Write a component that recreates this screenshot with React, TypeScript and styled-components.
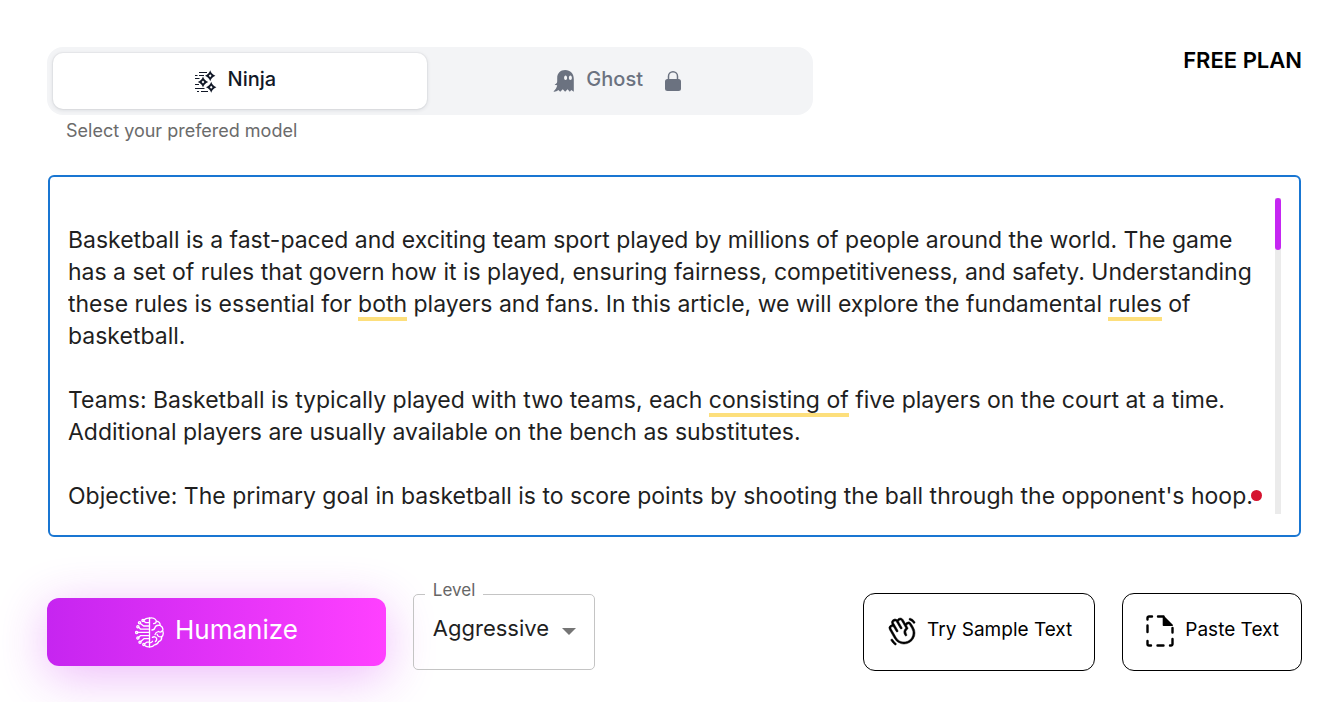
import React, { useLayoutEffect, useRef, useState } from "react";
import styled, { createGlobalStyle, css } from "styled-components";
import { PiHandWaving } from "react-icons/pi";

const GlobalStyle = createGlobalStyle`
  *, *::before, *::after { box-sizing: border-box; }
  body {
    margin: 0;
    background: #fff;
    color: #1f1f1f;
    font-family: Inter, "Liberation Sans", sans-serif;
    overflow-x: hidden;
  }
  button, select, textarea { font: inherit; color: inherit; margin: 0; }
`;

const Page = styled.main`
  display: flex;
  flex-direction: column;
  padding: 47px 42px 31px 47px;
`;

const Header = styled.header`
  display: flex;
  justify-content: space-between;
  align-items: flex-start;
`;

const ModelPicker = styled.div`
  display: flex;
  flex-direction: column;
  gap: 4px;
  width: 61%;
`;

const Tabs = styled.div`
  display: grid;
  grid-template-columns: 1fr 1fr;
  gap: 6px;
  padding: 6px;
  border-radius: 16px;
  background: #f3f4f6;
`;

const Tab = styled.button<{ $active?: boolean; $locked?: boolean }>`
  display: flex;
  align-items: center;
  justify-content: center;
  gap: 11px;
  height: 56px;
  padding: 0 ${(p) => (p.$locked ? 4 : 10)}px 4px 0;
  border: 0;
  border-radius: 10px;
  background: transparent;
  color: #6b7280;
  font-size: 20px;
  font-weight: 500;
  line-height: 28px;
  cursor: pointer;
  svg { position: relative; top: 2px; }
  ${(p) =>
    p.$active &&
    css`
      background: #fff;
      color: #111827;
      box-shadow: 0 0 0 1px rgba(17, 24, 39, 0.03), 0 1px 4px rgba(17, 24, 39, 0.12);
    `}
`;

const LockSlot = styled.span`
  display: flex;
  padding-left: 10px;
`;

const Helper = styled.p`
  margin: 0;
  padding: 0 19px;
  color: #6b6b6b;
  font-size: 18px;
  line-height: 24px;
`;

const Plan = styled.strong`
  color: #000;
  font-size: 22px;
  font-weight: 600;
  line-height: 26px;
`;

const Editor = styled.section`
  position: relative;
  display: flex;
  gap: 7px;
  margin: 32px 1px 0;
  padding: 21px 18px;
  border: 2px solid #1976d2;
  border-radius: 6px;
`;

const TextLayer = styled.div`
  position: relative;
  flex: 1;
  display: flex;
  overflow: hidden;
`;

const TextBox = styled.textarea`
  flex: 1;
  height: 316px;
  padding: 26px 0 0;
  border: 0;
  outline: 0;
  resize: none;
  background: transparent;
  font-size: 23px;
  line-height: 32px;
  scrollbar-width: none;
`;

const Underline = styled.span`
  position: absolute;
  height: 4px;
  margin-top: -1px;
  background: #fddf7c;
  pointer-events: none;
`;

const Track = styled.div`
  width: 6px;
  background: #ebebeb;
`;

const Thumb = styled.div`
  height: 52px;
  border-radius: 3px;
  background: #c526f2;
`;

const IssueDot = styled.span`
  position: absolute;
  right: 37px;
  bottom: 34px;
  width: 11px;
  height: 11px;
  border-radius: 50%;
  background: #d5132f;
`;

const Actions = styled.div`
  display: flex;
  align-items: center;
  gap: 27px;
  margin-top: 56px;
`;

const HumanizeButton = styled.button`
  display: flex;
  align-items: center;
  justify-content: center;
  gap: 11px;
  width: 27%;
  height: 68px;
  padding: 0 0 4px;
  border: 0;
  border-radius: 12px;
  background: linear-gradient(90deg, #c625f0, #ff40ff);
  box-shadow: 0 10px 50px rgba(198, 37, 240, 0.32);
  color: #fff;
  font-size: 26px;
  line-height: 32px;
  cursor: pointer;
  svg { position: relative; top: 2px; }
`;

const LevelField = styled.div`
  position: relative;
  display: flex;
  width: 182px;
  height: 76px;
  margin-right: auto;
`;

const LevelLabel = styled.label`
  position: absolute;
  left: 12px;
  top: -14px;
  padding: 0 8px;
  background: #fff;
  color: #666;
  font-size: 17px;
  line-height: 20px;
`;

const LevelSelect = styled.select`
  appearance: none;
  flex: 1;
  padding: 0 40px 8px 19px;
  border: 1px solid #c4c4c4;
  border-radius: 5px;
  background: transparent;
  font-size: 22px;
  line-height: 32px;
`;

const Caret = styled.svg`
  position: absolute;
  right: 19px;
  top: 34px;
  pointer-events: none;
`;

const OutlineButton = styled.button`
  display: flex;
  align-items: center;
  gap: 9px;
  height: 78px;
  padding: 0 22px 4px;
  border: 1px solid #000;
  border-radius: 12px;
  background: #fff;
  color: #000;
  font-size: 19px;
  line-height: 28px;
  white-space: nowrap;
  cursor: pointer;
  svg { position: relative; top: 1px; }
`;

const Star = ({ x, y }: { x: number; y: number }) => (
  <path
    transform={`translate(${x} ${y})`}
    fill="currentColor"
    fillRule="evenodd"
    stroke="none"
    d="M0-5.500Q1.100-1.700 5.200 0 1.100 1.700 0 5.500-1.100 1.700-5.200 0-1.100-1.700 0-5.500ZM0-1.500L-1.400 0 0 1.500 1.400 0Z"
  />
);

const NinjaIcon = () => (
  <svg width="23" height="23" viewBox="0 0 23 23" fill="none" stroke="currentColor" aria-hidden="true">
    <Star x={16.2} y={5.8} />
    <Star x={9} y={12} />
    <Star x={17.2} y={17.2} />
    <path d="M5 2.500h8M1 5.500h2.500M5 5.500h5M1 8.500h4.500M1 14.500h4M1 18.500h9.500M3 21.500h2M7 21.500h7" strokeWidth="1" />
  </svg>
);

const GhostIcon = () => (
  <svg width="22" height="24" viewBox="0 0 22 24" aria-hidden="true">
    <path
      fill="currentColor"
      fillRule="evenodd"
      d="M12.2 1C7.3 1 4.2 4.5 4.2 9v3.2c0 1.7-.9 2.8-2.6 3.2.7.7 1.7.9 2.6.7C3.9 18.700 2.600 20.800.4 22.600c2 .2 3.600-.4 4.900-1.600l1.900 1.800 2.600-2.600 2.300 2.600 2.500-2.600 2.200 2.500 1.500-1.600 2.500 1.700V10c0-5.400-3.400-9-8.600-9ZM12.600 6.400c.9 0 1.500 1 1.500 2.300S13.500 11 12.600 11s-1.500-1-1.500-2.300.6-2.300 1.500-2.300Zm4.800 0c.9 0 1.500 1 1.500 2.300s-.6 2.300-1.500 2.300-1.500-1-1.500-2.300.6-2.300 1.500-2.300Z"
    />
  </svg>
);

const LockIcon = () => (
  <svg width="18" height="22" viewBox="0 0 18 22" aria-hidden="true">
    <rect x="1" y="9" width="16" height="12" rx="2.500" fill="currentColor" />
    <path d="M4.500 10V6.200a4.500 4.500 0 0 1 9 0V10" fill="none" stroke="currentColor" strokeWidth="1.500" />
  </svg>
);

const BrainIcon = () => (
  <svg width="29" height="31" viewBox="0 0 29 31" fill="none" stroke="currentColor" strokeWidth="1.300" strokeLinecap="round" strokeLinejoin="round" aria-hidden="true">
    <path d="M14.500 1.200v28.600" />
    <path d="M14.500 1.200c-2.200-.4-4 .3-5.300 1.600M14.500 5.600h-3.800L8.800 4.200M14.500 9H8.600L5.400 6.400M14.500 12.200H5.600L3.800 10.400M14.500 15.400H2.600M14.500 18.600H5.600l-1.800 1.600M14.500 21.600H9.200l-3.400 3M14.500 25.200h-2.800l-2.200 1.600M14.500 29.800c-1.600.2-3-.1-4.200-.9" />
    <circle cx="8" cy="3.400" r="1.100" />
    <circle cx="4.500" cy="5.800" r="1.100" />
    <circle cx="2.900" cy="9.800" r="1.100" />
    <circle cx="1.700" cy="15.400" r="1.100" />
    <circle cx="2.900" cy="21" r="1.100" />
    <circle cx="5" cy="25.300" r="1.100" />
    <circle cx="8.800" cy="27.600" r="1.100" />
    <path d="M14.500 1.200c3-.7 6 .4 6.900 2.900 2.500.4 3.900 2.100 3.700 4.300 2.300 1.200 3.200 3.300 2.500 5.300 1 2.300.7 4.600-.9 6 .2 2.500-1 4.300-3 4.800-.9 2.300-2.500 3.300-4.300 3.300-1.200 1.600-3 2.300-4.900 2" />
    <path d="M21.400 4.100c-.2 1.500-1.300 2.400-2.800 2.500M25.100 8.400c-2.500-.5-4.600.3-5.200 2.400-.4 1.500-1.500 2.200-3 2.200M27.400 13.700c-.8 1.300-2.500 1.700-4 .8M20 17.600c.4-1.700 1.700-2.600 3.400-3.100M26.700 19.700c-2.200.5-4.200-.3-4.600-2.300M17.400 20.400c1.500-1 3.200-.8 4 .6.600 1.200.2 2.600-1 3.600M14.500 25.800c1.400 0 2.400-.5 3-1.500" />
  </svg>
);

const PasteIcon = () => (
  <svg width="31" height="32" viewBox="-1 0 31 32" fill="none" stroke="currentColor" strokeWidth="2.400" strokeLinecap="round" aria-hidden="true">
    <path d="M1.500 4.500V3a1.500 1.500 0 0 1 1.500-1.500h3M12 1.500h5.500M1.500 10.500v6.500M1.500 26V29A1.500 1.500 0 0 0 3 30.500h2M11.500 30.500h6M24 30.500h1a1.500 1.500 0 0 0 1.500-1.500V24M26.500 13v4.500" />
    <path d="M17.500 1.500v8.700h8.700Z" fill="currentColor" strokeWidth="1.600" strokeLinejoin="round" />
  </svg>
);

const sampleText = `Basketball is a fast-paced and exciting team sport played by millions of people around the world. The game has a set of rules that govern how it is played, ensuring fairness, competitiveness, and safety. Understanding these rules is essential for both players and fans. In this article, we will explore the fundamental rules of basketball.

Teams: Basketball is typically played with two teams, each consisting of five players on the court at a time. Additional players are usually available on the bench as substitutes.

Objective: The primary goal in basketball is to score points by shooting the ball through the opponent's hoop.
`;

const suggestions = [
  { phrase: "both", after: "essential for" },
  { phrase: "rules", after: "the fundamental" },
  { phrase: "consisting of", after: "teams, each" },
];

type Rect = { left: number; top: number; width: number };

/* Lays the text out in a temporary copy of the box to find where each suggestion falls. */
function measure(box: HTMLTextAreaElement, text: string): Rect[] {
  const copy = document.createElement("div");
  const s = getComputedStyle(box);
  copy.style.cssText = `position:absolute;visibility:hidden;white-space:pre-wrap;overflow-wrap:break-word;top:0;left:0;width:${box.clientWidth}px;padding:${s.padding};font:${s.font};`;
  copy.textContent = text;
  document.body.appendChild(copy);
  const origin = copy.getBoundingClientRect();
  const rects: Rect[] = [];
  for (const { phrase, after } of suggestions) {
    const at = text.indexOf(`${after} ${phrase}`);
    if (at < 0 || !copy.firstChild) continue;
    const start = at + after.length + 1;
    const range = document.createRange();
    range.setStart(copy.firstChild, start);
    range.setEnd(copy.firstChild, start + phrase.length);
    for (const r of Array.from(range.getClientRects())) {
      rects.push({ left: r.left - origin.left, top: r.bottom - origin.top, width: r.width });
    }
  }
  copy.remove();
  return rects;
}

export default function App() {
  const box = useRef<HTMLTextAreaElement>(null);
  const [text, setText] = useState(sampleText);
  const [scroll, setScroll] = useState(0);
  const [marks, setMarks] = useState<Rect[]>([]);
  const [model, setModel] = useState("ninja");

  useLayoutEffect(() => {
    const update = () => box.current && setMarks(measure(box.current, text));
    update();
    window.addEventListener("resize", update);
    return () => window.removeEventListener("resize", update);
  }, [text]);

  return (
    <>
      <GlobalStyle />
      <Page>
        <Header>
          <ModelPicker>
            <Tabs>
              <Tab type="button" $active={model === "ninja"} aria-pressed={model === "ninja"} onClick={() => setModel("ninja")}>
                <NinjaIcon />
                Ninja
              </Tab>
              <Tab type="button" $locked $active={model === "ghost"} aria-pressed={model === "ghost"} onClick={() => setModel("ghost")}>
                <GhostIcon />
                Ghost
                <LockSlot>
                  <LockIcon />
                </LockSlot>
              </Tab>
            </Tabs>
            <Helper>Select your prefered model</Helper>
          </ModelPicker>
          <Plan>FREE PLAN</Plan>
        </Header>

        <Editor>
          <TextLayer>
            <TextBox
              ref={box}
              aria-label="Text to humanize"
              spellCheck={false}
              value={text}
              onChange={(e) => setText(e.target.value)}
              onScroll={(e) => setScroll(e.currentTarget.scrollTop)}
            />
            {marks.map((m, i) => (
              <Underline key={i} style={{ left: m.left, top: m.top - scroll, width: m.width }} />
            ))}
          </TextLayer>
          <Track>
            <Thumb />
          </Track>
          <IssueDot />
        </Editor>

        <Actions>
          <HumanizeButton type="button">
            <BrainIcon />
            Humanize
          </HumanizeButton>
          <LevelField>
            <LevelSelect id="level" defaultValue="Aggressive">
              <option>Aggressive</option>
            </LevelSelect>
            <LevelLabel htmlFor="level">Level</LevelLabel>
            <Caret width="14" height="7" viewBox="0 0 14 7" aria-hidden="true">
              <path d="M0 0h14L7 7Z" fill="#757575" />
            </Caret>
          </LevelField>
          <OutlineButton type="button">
            <PiHandWaving size={32} stroke="currentColor" strokeWidth={4} />
            Try Sample Text
          </OutlineButton>
          <OutlineButton type="button">
            <PasteIcon />
            Paste Text
          </OutlineButton>
        </Actions>
      </Page>
    </>
  );
}
